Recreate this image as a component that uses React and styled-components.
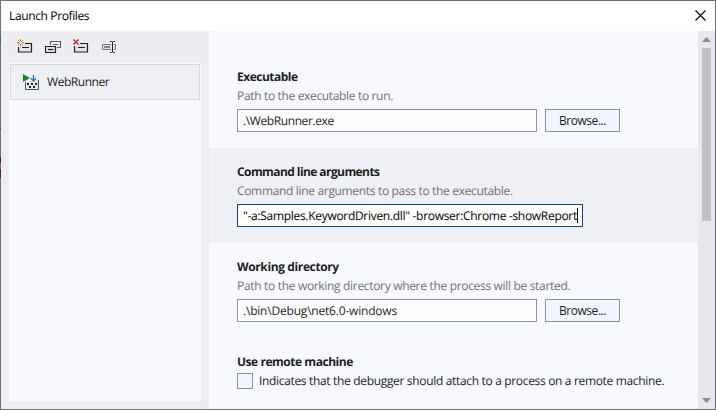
import React from "react";
import styled, { createGlobalStyle } from "styled-components";

const Global = createGlobalStyle`
  * { box-sizing: border-box; }
  body { margin: 0; overflow: hidden; font: 12px/16px "Open Sans", "Noto Sans", sans-serif; color: #1e1e1e; text-rendering: geometricPrecision; }
`;

const Window = styled.div`
  position: relative;
  display: flex;
  flex-direction: column;
  width: 716px;
  height: 410px;
  border: 1px solid #717074;
  background: #fff;

  /* content of the window behind, showing through the translucent edge */
  &::before {
    content: "";
    position: absolute;
    left: -1px;
    top: 0;
    width: 1px;
    height: 100%;
    background: linear-gradient(
      transparent 34px, #2e6a8c 34px 42px, transparent 42px 127px,
      #3c3b3e 127px 128px, transparent 128px 156px, #2b2b5c 156px 158px,
      #4c2038 158px 162px, transparent 162px 168px, #4c2038 168px 177px,
      transparent 177px
    );
  }
`;
const TitleBar = styled.header`
  display: flex;
  align-items: center;
  justify-content: space-between;
  height: 30px;
  flex: none;
  padding: 0 9px 0 8px;
  color: #000;
`;
const Body = styled.div`
  display: flex;
  flex: 1;
  min-height: 0;
`;
const Sidebar = styled.aside`
  display: flex;
  flex-direction: column;
  width: 208px;
  padding: 0 8px 8px;
  background: #eeedf1;
`;
const Toolbar = styled.div`
  display: flex;
  gap: 12px;
  height: 32px;
  padding: 8px 0 0 8px;
`;
const ProfileList = styled.div`
  flex: 1;
  padding: 1px;
  background: #f7f9fe;
`;
const Profile = styled.div`
  display: flex;
  align-items: center;
  gap: 8px;
  height: 36px;
  padding-left: 12px;
  border: 1px solid #d8d8da;
  background: #eff0f4;
`;
const Settings = styled.main`
  flex: 1;
  padding-top: 22px;
  overflow: hidden;
  background: #f7f9fe;
`;
const Section = styled.section`
  height: 95px;
  padding: 16px 0 0 28px;
  background: ${(p) => (p.$active ? "#eff0f5" : "transparent")};
`;
const Text = styled.span`
  display: block;
  width: max-content;
  white-space: pre;
  letter-spacing: ${(p) => p.$track || 0}px;
`;
const Heading = styled(Text)`
  font-weight: 700;
`;
const Description = styled(Text)`
  margin-top: 3px;
  color: #717171;
`;
const Row = styled.div`
  display: flex;
  align-items: center;
  gap: ${(p) => p.$gap || 8}px;
  margin-top: ${(p) => p.$top ?? 5}px;
`;
const Field = styled.div`
  display: flex;
  align-items: center;
  width: ${(p) => p.$width || 300}px;
  height: 23px;
  padding-left: 5px;
  border: 1px solid ${(p) => (p.$focus ? "#213f7f" : "#8a93a8")};
  background: #fdfdfd;
  color: ${(p) => (p.$focus ? "#000" : "#1e1e1e")};
`;
const Caret = styled.i`
  width: 1px;
  height: 15px;
  background: #000;
`;
const Button = styled.button`
  display: flex;
  align-items: center;
  justify-content: center;
  width: 75px;
  height: 23px;
  padding: 0;
  border: 1px solid #8a93a8;
  background: #f2f5fd;
  color: #1e1e1e;
  font: inherit;
`;
const Checkbox = styled.span`
  width: 16px;
  height: 16px;
  border: 1px solid #8a93a8;
  background: #f2f5fd;
`;
const Scrollbar = styled.div`
  display: flex;
  flex-direction: column;
  align-items: center;
  width: 17px;
  padding: 6px 0;
  background: #e8e8ec;
`;
const Thumb = styled.div`
  width: 9px;
  height: 173px;
  margin: 6px 0 auto;
  background: #c2c3c9;
`;
const Icon = styled.svg`
  display: block;
  flex: none;
`;
const CloseGlyph = styled(Icon)`
  margin-bottom: 1px;
`;

const NewIcon = () => (
  <Icon width="16" height="16" viewBox="0 0 16 16" fill="none">
    <path d="M7 4.5h7.5v8.500H1.500V8" fill="#e3e3e5" />
    <path d="M8 4.5h6.500v8.500H1.500V8M5 8.500h7" stroke="#212121" strokeWidth="1.200" />
    <path d="M3.500 0v7M0 3.500h7M1 1l5 5M6 1l-5 5" stroke="#a87510" strokeWidth=".9" />
    <circle cx="3.500" cy="3.500" r="1.200" fill="#fff" />
  </Icon>
);
const CopyIcon = () => (
  <Icon width="16" height="16" viewBox="0 0 16 16" fill="none">
    <path d="M5.500 6V2.500h10v6H12M8 5.500h5" stroke="#5f5f61" strokeWidth="1.200" />
    <path d="M.5 7.500h10v6H.5z" fill="#e3e3e5" stroke="#212121" strokeWidth="1.200" />
    <path d="M3 10.500h5.500" stroke="#212121" strokeWidth="1.200" />
  </Icon>
);
const DeleteIcon = () => (
  <Icon width="16" height="16" viewBox="0 0 16 16" fill="none">
    <path d="M7 4.500h7.500v8.500H1.500V7" fill="#e3e3e5" />
    <path d="M7 4.500h7.500v8.500H1.500V7M5 8.500h7" stroke="#212121" strokeWidth="1.200" />
    <path d="M.5 0.500l5 5M5.500 0.500l-5 5" stroke="#c91f30" strokeWidth="1.400" />
  </Icon>
);
const RenameIcon = () => (
  <Icon width="16" height="16" viewBox="0 0 16 16" fill="none">
    <path d="M10 5.500H1.500v5H10M13 5.500h1.500v5H13" stroke="#77777a" fill="#e3e3e5" />
    <path d="M3 7h6v2H3z" fill="#858588" />
    <path d="M9 2.500h1.500l1 .5 1-.5H14M11.500 3v10M9 13.500h1.500l1-.5 1 .5H14" stroke="#212121" />
  </Icon>
);
const ProfileIcon = () => (
  <Icon width="16" height="16" viewBox="0 0 16 16" fill="none">
    <path d="M2.500 8v7.500h13V6" fill="#e6e6e8" />
    <path d="M2.500 8v7.500h13V6" stroke="#555" />
    <path d="M0 0v8l7-4z" fill="#1f801f" />
    <path d="M10.500 1v6M8 4.500L10.500 7 13 4.500" stroke="#1268b8" strokeWidth="1.200" />
    <path d="M4 9h2v2H4zM8 9h2v2H8zM12 9h2v2h-2zM6 12h2v2H6zM10 12h2v2h-2z" fill="#242424" />
  </Icon>
);
const Arrow = ({ down }) => (
  <Icon width="9" height="5" viewBox="0 0 9 5">
    <path d={down ? "M0 0h9L4.500 5z" : "M0 5h9L4.500 0z"} fill="#868999" />
  </Icon>
);

export default function App() {
  return (
    <>
      <Global />
      <Window>
        <TitleBar>
          <Text $track={-0.37}>Launch Profiles</Text>
          <CloseGlyph width="11" height="11" viewBox="0 0 11 11">
            <path d="M.5 .5l10 10M10.500 .5l-10 10" stroke="#000" strokeWidth="1.100" />
          </CloseGlyph>
        </TitleBar>
        <Body>
          <Sidebar>
            <Toolbar>
              <NewIcon />
              <CopyIcon />
              <DeleteIcon />
              <RenameIcon />
            </Toolbar>
            <ProfileList>
              <Profile>
                <ProfileIcon />
                <Text $track={-0.45}>WebRunner</Text>
              </Profile>
            </ProfileList>
          </Sidebar>
          <Settings>
            <Section>
              <Heading $track={-0.5}>Executable</Heading>
              <Description $track={-0.34}>Path to the executable to run.</Description>
              <Row>
                <Field><Text $track={-0.4}>.\WebRunner.exe</Text></Field>
                <Button><Text $track={-0.45}>Browse...</Text></Button>
              </Row>
            </Section>
            <Section $active>
              <Heading $track={-0.58}>Command line arguments</Heading>
              <Description $track={-0.33}>Command line arguments to pass to the executable.</Description>
              <Row>
                <Field $width={346} $focus>
                  <Text $track={-0.3}>"-a:Samples.KeywordDriven.dll" -browser:Chrome -showReport</Text>
                  <Caret />
                </Field>
              </Row>
            </Section>
            <Section>
              <Heading $track={-0.38}>Working directory</Heading>
              <Description $track={-0.32}>Path to the working directory where the process will be started.</Description>
              <Row>
                <Field><Text $track={-0.2}>.\bin\Debug\net6.0-windows</Text></Field>
                <Button><Text $track={-0.45}>Browse...</Text></Button>
              </Row>
            </Section>
            <Section>
              <Heading $track={-0.46}>Use remote machine</Heading>
              <Row $gap={6} $top={3}>
                <Checkbox />
                <Text $track={-0.33}>Indicates that the debugger should attach to a process on a remote machine.</Text>
              </Row>
            </Section>
          </Settings>
          <Scrollbar>
            <Arrow />
            <Thumb />
            <Arrow down />
          </Scrollbar>
        </Body>
      </Window>
    </>
  );
}
